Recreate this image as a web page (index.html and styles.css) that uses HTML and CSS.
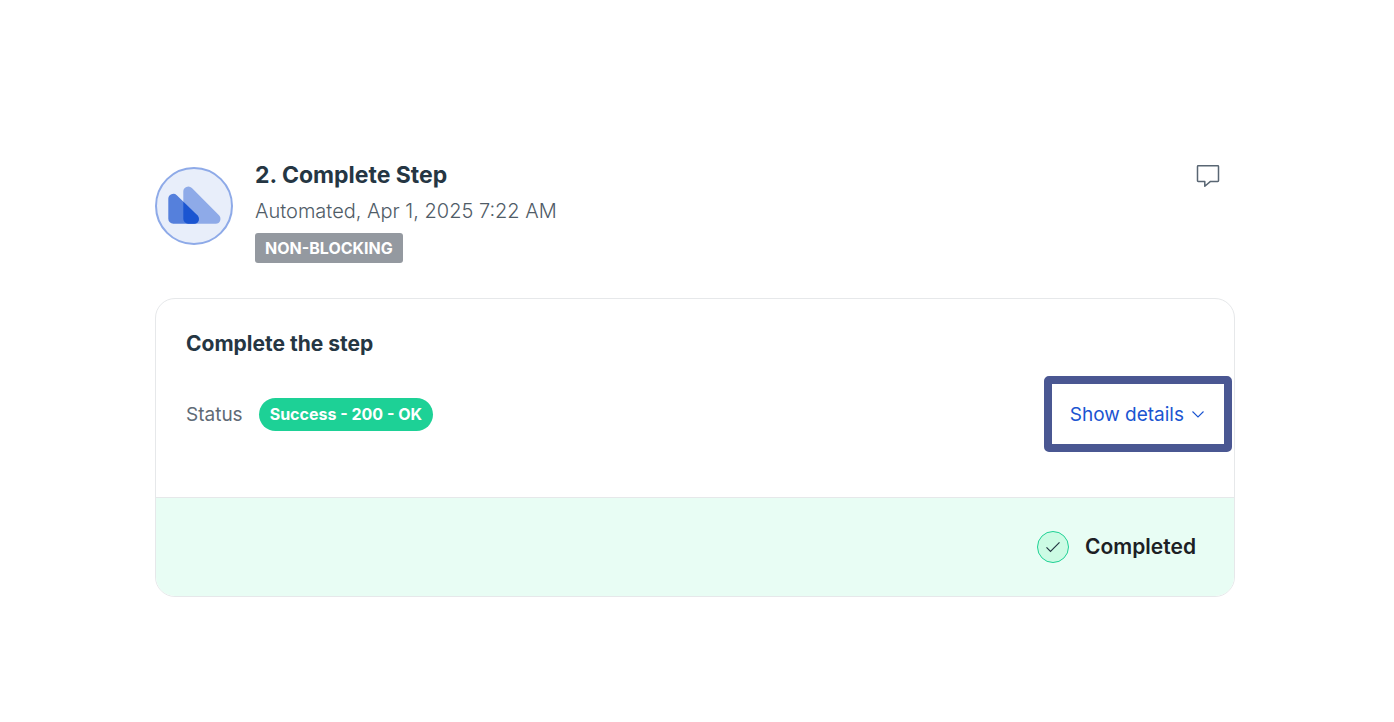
FILE: index.html
```html
<!DOCTYPE html>
<html lang="en">
<head>
    <meta charset="UTF-8">
    <meta name="viewport" content="width=device-width, initial-scale=1.0">
    <title>Complete Step</title>
    <link rel="stylesheet" href="styles.css">
</head>
<body>
    <main class="step">
        <header class="step-header">
            <div class="avatar">
                <svg viewBox="0 0 78 78" width="78" height="78" aria-hidden="true">
                    <circle cx="39" cy="39" r="38" fill="#e8eefa" stroke="#8eaae8" stroke-width="2"/>
                    <path d="M28.3 24.6a5 5 0 0 1 8.6-3.5L64 48.2c3 3 1.200 8.600-3.200 8.600H33.300a5 5 0 0 1-5-5z" fill="#8eaae8"/>
                    <path d="M13.300 31.800a5 5 0 0 1 8.500-3.500L42.300 48.200c3.200 3.200 1.400 8.600-3.200 8.600H18.300a5 5 0 0 1-5-5z" fill="#5580dc"/>
                    <path d="M28.300 34.700L42.300 48.200c3.200 3.200 1.400 8.600-3.200 8.600H33.300a5 5 0 0 1-5-5z" fill="#1b55d1"/>
                </svg>
            </div>
            <div class="step-info">
                <h1>2. Complete Step</h1>
                <p class="meta">Automated, Apr 1, 2025 7:22 AM</p>
                <span class="badge">NON-BLOCKING</span>
            </div>
            <button type="button" class="comment-btn" aria-label="Comments">
                <svg viewBox="0 0 24 24" width="24" height="24" fill="none" stroke="#596673" stroke-width="1.5" stroke-linejoin="round">
                    <path d="M2.200 1.800h19.600a.7.7 0 0 1 .7.7v14.200a.7.7 0 0 1-.7.7h-7.300L8.800 22.300v-4.900H2.200a.7.7 0 0 1-.7-.7V2.500a.7.7 0 0 1 .7-.7z"/>
                </svg>
            </button>
        </header>

        <section class="card">
            <div class="card-body">
                <h2>Complete the step</h2>
                <div class="status-row">
                    <span class="status-label">Status</span>
                    <span class="pill">Success - 200 - OK</span>
                    <button type="button" class="details-btn">
                        Show details
                        <svg viewBox="0 0 12 8" width="12" height="8" fill="none" stroke="currentColor" stroke-width="1.1" aria-hidden="true">
                            <path d="M.5 1.500L6 7l5.500-5.500"/>
                        </svg>
                    </button>
                </div>
            </div>
            <footer class="card-footer">
                <svg viewBox="0 0 32 32" width="32" height="32" fill="none" aria-hidden="true">
                    <circle cx="16" cy="16" r="15.500" fill="#ccfbe4" stroke="#1fd094"/>
                    <path d="M9.500 16.300l4 4L22.500 11.300" stroke="#253643" stroke-width="1.200"/>
                </svg>
                <span>Completed</span>
            </footer>
        </section>
    </main>
</body>
</html>
```
FILE: styles.css
```css
:root {
    --text-color: #253643;
    --muted-color: #5f6b76;
    --border-color: #e6e8ea;
    --link-color: #1b55d1;
    --success-color: #1dd196;
}

* {
    box-sizing: border-box;
}

body {
    margin: 0;
    background: #fff;
    color: var(--text-color);
    font-family: Inter, "Liberation Sans", sans-serif;
    font-size: 19px;
}

h1,
h2,
p {
    margin: 0;
}

button {
    font: inherit;
    cursor: pointer;
}

svg {
    display: block;
}

.step {
    padding: 158px 159px 40px 155px;
}

.step-header {
    display: flex;
    align-items: flex-start;
    margin-bottom: 35px;
}

.avatar {
    margin: 9px 22px 0 0;
}

.step-info {
    flex: 1;
}

h1 {
    font-size: 23px;
    font-weight: 700;
    line-height: 34px;
}

.meta {
    color: #505c67;
    font-size: 20px;
    font-weight: 300;
    line-height: 38px;
}

.badge {
    display: block;
    width: fit-content;
    margin-top: 3px;
    padding: 0 10px;
    border-radius: 3px;
    background: #9499a0;
    color: #fff;
    font-size: 16px;
    font-weight: 700;
    line-height: 30px;
}

.comment-btn {
    margin: 6px 15px 0 0;
    padding: 0;
    border: 0;
    background: none;
}

.card {
    border: 1px solid var(--border-color);
    border-radius: 20px;
    overflow: hidden;
}

.card-body {
    padding: 30px 2px 45px 30px;
}

h2 {
    font-size: 21px;
    font-weight: 700;
    line-height: 30px;
}

.status-row {
    display: flex;
    align-items: center;
    margin-top: 17px;
}

.status-label {
    color: var(--muted-color);
}

.pill {
    margin-left: 16px;
    padding: 0 11px;
    border-radius: 17px;
    background: var(--success-color);
    color: #fff;
    font-size: 16px;
    font-weight: 700;
    line-height: 33px;
}

.details-btn {
    display: flex;
    align-items: center;
    gap: 8px;
    height: 76px;
    margin-left: auto;
    padding: 0 20px 0 18px;
    border: 8px solid #4a5792;
    border-radius: 5px;
    background: #fff;
    color: var(--link-color);
}

.card-footer {
    display: flex;
    align-items: center;
    justify-content: flex-end;
    gap: 16px;
    padding: 33px 38px;
    border-top: 1px solid var(--border-color);
    background: #e8fdf4;
    color: #1c2024;
    font-size: 21px;
    font-weight: 600;
    line-height: 32px;
}
```
